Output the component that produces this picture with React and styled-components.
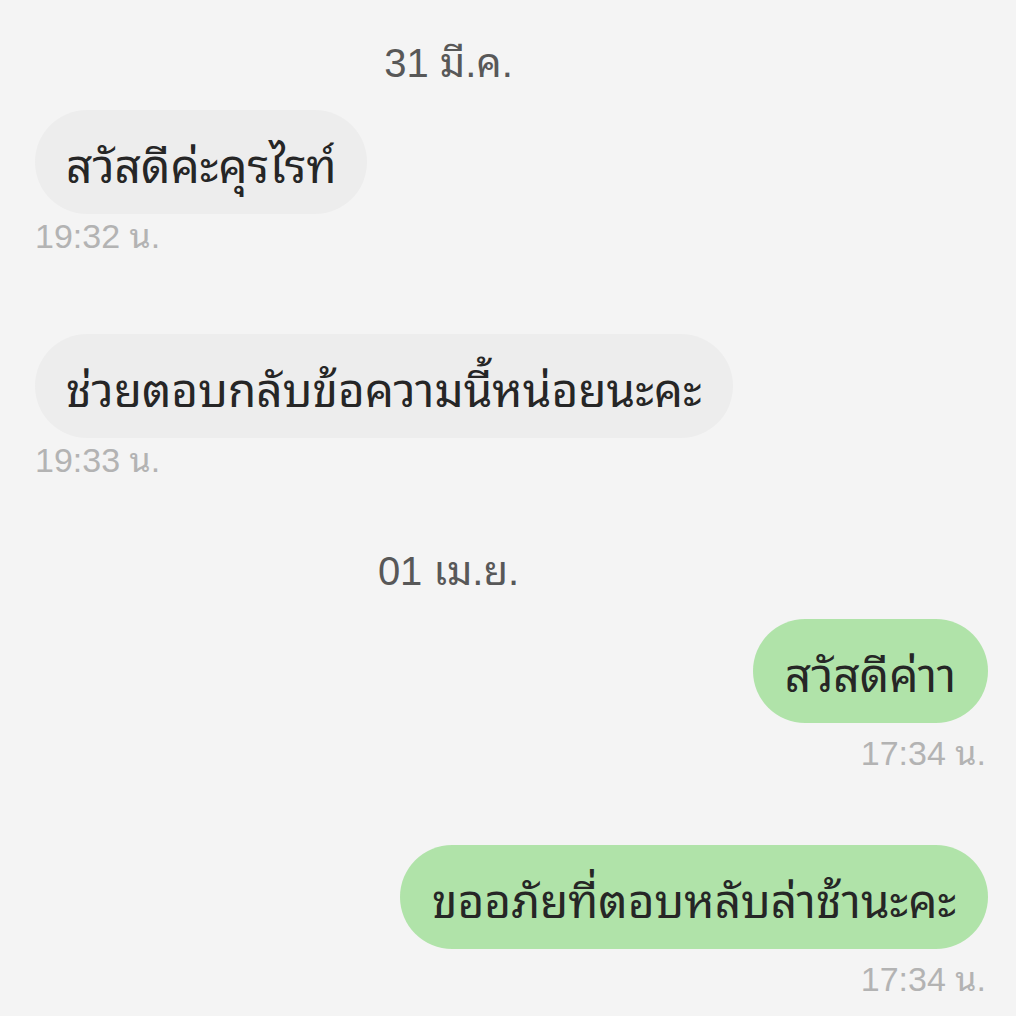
import React from "react"
import styled, { createGlobalStyle } from "styled-components"

const GlobalStyle = createGlobalStyle`
  html, body {
    margin: 0;
    padding: 0;
    background: #f4f4f4;
  }
  body {
    font-family: "Liberation Sans", "Noto Sans Thai Looped", "Noto Sans Thai", "Noto Sans", sans-serif;
  }
`

const Screen = styled.div`
  width: 1016px;
  height: 1016px;
  overflow: hidden;
  background: #f4f4f4;
  display: flex;
  flex-direction: column;
  padding: 40px 28px 0 35px;
  box-sizing: border-box;
`

const DateLabel = styled.div`
  align-self: stretch;
  text-align: center;
  padding-right: 126px;
  font-size: 40px;
  line-height: 46px;
  color: #585858;
  margin-bottom: ${(p) => p.gap}px;
`

const Row = styled.div`
  display: flex;
  flex-direction: column;
  align-items: ${(p) => (p.mine ? "flex-end" : "flex-start")};
  margin-bottom: ${(p) => p.gap || 0}px;
`

const Bubble = styled.div`
  height: 104px;
  display: flex;
  align-items: center;
  padding: 0 ${(p) => (p.mine ? 32 : 31)}px;
  border-radius: 52px;
  background: ${(p) => (p.mine ? "#b0e3a9" : "#ededed")};
  color: #262626;
  font-size: 46px;
  white-space: nowrap;
`

const Time = styled.div`
  font-size: 34px;
  line-height: 44px;
  color: #b3b3b3;
  margin-top: ${(p) => (p.mine ? 8 : 0)}px;
  padding-right: ${(p) => (p.mine ? 2 : 0)}px;
`

const messages = [
  { date: "31 มี.ค.", gap: 24 },
  { text: "สวัสดีค่ะคุรไรท์", time: "19:32 น.", gap: 76 },
  { text: "ช่วยตอบกลับข้อความนี้หน่อยนะคะ", time: "19:33 น.", gap: 66 },
  { date: "01 เม.ย.", gap: 25 },
  { text: "สวัสดีค่าา", time: "17:34 น.", mine: true, gap: 70 },
  { text: "ขออภัยที่ตอบหลับล่าช้านะคะ", time: "17:34 น.", mine: true },
]

export default function App() {
  return (
    <>
      <GlobalStyle />
      <Screen>
        {messages.map((m, i) =>
          m.date ? (
            <DateLabel key={i} gap={m.gap}>
              {m.date}
            </DateLabel>
          ) : (
            <Row key={i} mine={m.mine} gap={m.gap}>
              <Bubble mine={m.mine}>{m.text}</Bubble>
              <Time mine={m.mine}>{m.time}</Time>
            </Row>
          )
        )}
      </Screen>
    </>
  )
}
